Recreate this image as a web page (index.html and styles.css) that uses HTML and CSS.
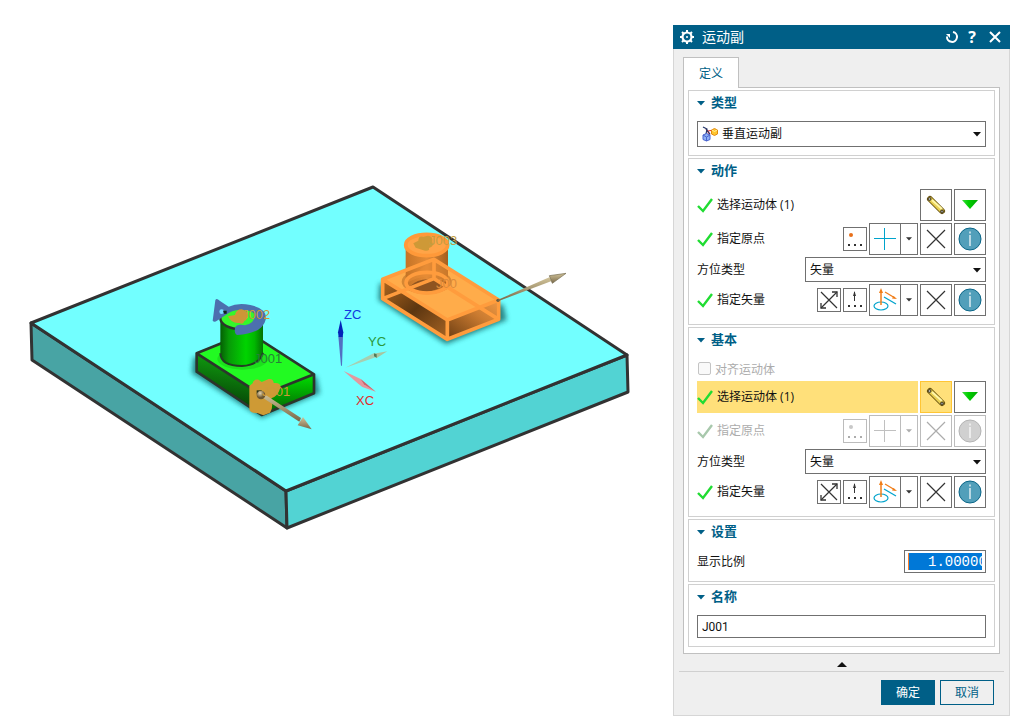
FILE: index.html
```html
<!DOCTYPE html>
<html lang="zh-CN">
<head>
<meta charset="utf-8">
<title>运动副</title>
<link rel="stylesheet" href="styles.css">
</head>
<body>
<svg class="defs" aria-hidden="true">
  <symbol id="check" viewBox="0 0 16 16"><path d="M1 9l5 5L15 2" fill="none" stroke="currentColor" stroke-width="2.400"/></symbol>
  <symbol id="pin" viewBox="0 0 24 24">
    <path d="M6 6L18 18" stroke="#6b5410" stroke-width="6" stroke-linecap="round"/>
    <path d="M6 6L18 18" stroke="#e8cf52" stroke-width="4" stroke-linecap="round"/>
    <path d="M8 7L18 16" stroke="#fff6a8" stroke-width="2"/>
    <circle cx="5.500" cy="6" r="1.500" fill="#aaa" stroke="#443a18"/><circle cx="18" cy="18.500" r="1.500" fill="#888" stroke="#443a18"/>
  </symbol>
  <symbol id="down" viewBox="0 0 18 10"><path d="M1 0h16L9 9z" fill="url(#greenTri)"/></symbol>
  <symbol id="dots" viewBox="0 0 24 24"><path d="M5 17h2v2H5zM11 17h2v2h-2zM17 17h2v2h-2z" fill="currentColor"/><circle cx="8" cy="8" r="2" fill="var(--dot)"/></symbol>
  <symbol id="updots" viewBox="0 0 24 24"><path d="M5 17h2v2H5zM11 17h2v2h-2zM17 17h2v2h-2z" fill="currentColor"/><path d="M11.500 13V4" stroke="currentColor"/><path d="M11.500 3l1.500 5h-3z" fill="currentColor"/></symbol>
  <symbol id="plus" viewBox="0 0 22 22"><path d="M10.500 0v22M0 10.500h22" fill="none" stroke="var(--plus)"/></symbol>
  <symbol id="cross" viewBox="0 0 20 20"><path d="M1 1l18 18M19 1L1 19" stroke="currentColor" stroke-width="1.200"/></symbol>
  <symbol id="flip" viewBox="0 0 24 24"><path d="M4 4l16 16M4 20L20 4" stroke="currentColor" stroke-width="1.200"/><path d="M15 4h5v5M4 15v5h5" fill="none" stroke="currentColor" stroke-width="1.300"/></symbol>
  <symbol id="info" viewBox="0 0 24 24"><circle cx="12" cy="12" r="11" fill="var(--disc)" stroke="var(--ring)"/><path d="M12 8v11M12 4.500v2" stroke="#fff" stroke-width="1.200"/></symbol>
  <symbol id="vector" viewBox="0 0 26 26">
    <ellipse cx="9" cy="19" rx="7" ry="4" fill="none" stroke="#00a3cc" stroke-width="1.200"/>
    <path d="M9 18V4" stroke="#f07d18" stroke-width="1.500"/><path d="M9 1l2 5H7z" fill="#f07d18"/>
    <path d="M13 5l10 6" stroke="#f07d18" stroke-width="1.300"/><path d="M25 12l-5-.500L21.500 9z" fill="#f07d18"/>
    <path d="M12 10l12 7" stroke="#00a3cc" stroke-width="1.300"/>
  </symbol>
  <symbol id="caret" viewBox="0 0 8 5"><path d="M0 0h8L4 4.500z" fill="currentColor"/></symbol>
  <linearGradient id="greenTri"><stop offset="0" stop-color="#3ddc3d"/><stop offset=".4" stop-color="#00cf00"/><stop offset="1" stop-color="#00a800"/></linearGradient>
</svg>

<main class="page">
  <svg class="scene" viewBox="0 25 673 691" role="img" aria-label="三维视图">
    <defs>
      <filter id="soft" x="-30%" y="-30%" width="160%" height="160%"><feGaussianBlur stdDeviation="8"/></filter>
      <linearGradient id="gCyl"><stop offset="0" stop-color="#045f04"/><stop offset=".2" stop-color="#079a07"/><stop offset=".6" stop-color="#00d400"/><stop offset=".8" stop-color="#00b800"/><stop offset="1" stop-color="#047004"/></linearGradient>
      <linearGradient id="gLeft" x1=".3" y1="0" x2="0.100" y2="1"><stop offset="0" stop-color="#10a010"/><stop offset="1" stop-color="#032803"/></linearGradient>
      <linearGradient id="gRight" x1="0" y1="0" x2="0" y2="1"><stop offset="0" stop-color="#00e000"/><stop offset="1" stop-color="#035a03"/></linearGradient>
      <linearGradient id="oCyl"><stop offset="0" stop-color="#c57426"/><stop offset=".5" stop-color="#e48b36"/><stop offset=".7" stop-color="#c87a30"/><stop offset="1" stop-color="#a45f1e"/></linearGradient>
      <linearGradient id="oLeft" x1="0" y1="0" x2="1" y2="1"><stop offset="0" stop-color="#b0671f"/><stop offset=".5" stop-color="#5c3610"/><stop offset="1" stop-color="#a86424"/></linearGradient>
      <linearGradient id="oRight" x1="0" y1="1" x2="1" y2="0"><stop offset="0" stop-color="#6b3d12"/><stop offset=".6" stop-color="#c97a30"/><stop offset="1" stop-color="#f09a44"/></linearGradient>
      <linearGradient id="tan" x1="0" y1="0" x2="0" y2="1"><stop offset="0" stop-color="#d2c49a"/><stop offset="1" stop-color="#786848"/></linearGradient>
      <radialGradient id="ball" cx=".4" cy=".3"><stop offset="0" stop-color="#e6d4b0"/><stop offset="1" stop-color="#6b5630"/></radialGradient>
    </defs>
    <g stroke="#323232" stroke-width="3" stroke-linejoin="round">
      <path d="M31 323L286 491 287 528 32 360z" fill="#48a4a4"/>
      <path d="M286 491L627 355 628 392 287 528z" fill="#52d3d3"/>
      <path d="M31 323L373 187 627 355 286 491z" fill="#72ffff"/>
    </g>
    <g transform="translate(180 285) scale(.33333)" stroke-linejoin="round">
      <path d="M40 215L35 265 245 400 420 325 410 275z" fill="#167070" opacity=".8" filter="url(#soft)"/>
      <path d="M50 205L245 330V390L50 260z" fill="url(#gLeft)"/>
      <path d="M245 330L402 268V325L245 390z" fill="url(#gRight)"/>
      <path d="M50 205L206 142 402 268 245 330z" fill="#22fa22"/>
      <path d="M50 205L206 142 402 268 245 330zM50 205V260L245 390 402 325V268M245 330v60" fill="none" stroke="#2c352c" stroke-width="8"/>
      <ellipse cx="188" cy="222" rx="76" ry="32" fill="#0a990a" opacity=".25"/>
      <path d="M121 100V210Q130 243 186 243 238 240 249 205V100z" fill="url(#gCyl)"/>
      <path d="M121 205Q122 243 186 243 238 240 249 203" fill="none" stroke="#243d24" stroke-width="6"/>
      <ellipse cx="185" cy="100" rx="64" ry="33" fill="#35f72b" stroke="#2c352c" stroke-width="7"/>
      <path d="M98 107L106 46Q109 38 119 47L146 65Q174 52 211 60 260 70 258 101 248 146 172 150 162 148 165 129 170 115 195 121 223 116 225 91 220 75 181 75 155 75 136 91L111 107Q103 113 98 107z" fill="#4c70ae"/>
      <circle cx="125" cy="80" r="7" fill="#75ddff"/><path d="M129 77h11v9h-8z" fill="#13201b"/>
      <path d="M144 94L165 90Q168 73 185 73 203 77 204 92 200 106 193 108 190 120 178 114 155 117 144 94z" fill="#ce9637"/>
      <path d="M208 303L218 295Q220 282 236 284L245 291 266 282Q280 280 281 294 302 292 302 307 292 336 274 340 281 368 270 383L250 391 232 384Q210 385 208 372z" fill="#ce9a35"/>
      <path d="M230 316h15v12h-15z" fill="#29351c"/>
      <path d="M248 324L363 399 358 410 246 337z" fill="url(#tan)"/>
      <path d="M395 433L353 421 369 396z" fill="url(#tan)"/><circle cx="243" cy="330" r="13" fill="url(#ball)"/>
    </g>
    <g transform="translate(370 220) scale(.33333)" stroke-linejoin="round">
      <path d="M28 190L25 240 228 373 410 300 400 255z" fill="#176868" opacity=".8" filter="url(#soft)"/>
      <path d="M38 178L232 300V358L38 236z" fill="url(#oLeft)"/>
      <path d="M232 300L386 240V298L232 358z" fill="url(#oRight)"/>
      <path d="M38 178L192 118 386 240 232 300z" fill="#ffac4a"/>
      <ellipse cx="170" cy="185" rx="75" ry="38" fill="#b96e27" opacity=".6"/>
      <path d="M107 75H234V185Q215 215 170 217 125 213 107 185z" fill="url(#oCyl)"/>
      <path d="M110 180L190 118 234 145V190Q170 150 110 190z" fill="#e88d35" opacity=".55"/>
      <path d="M118 200Q160 162 222 190 205 215 169 215 130 214 118 200z" fill="#8f5420"/>
      <path d="M38 178L192 118 386 240 232 300zM38 178V236L232 358 386 298V240M232 300v58M192 118v58M38 236L192 176 386 298" fill="none" stroke="#ff9c3d" stroke-width="11"/>
      <ellipse cx="171" cy="188" rx="63" ry="31" fill="none" stroke="#ff9c3d" stroke-width="11"/>
      <ellipse cx="170" cy="75" rx="63" ry="32" fill="#ffa447" stroke="#ff9939" stroke-width="11"/>
      <path d="M130 70L145 62Q145 46 160 50L174 47Q190 48 187 65 193 79 177 84 180 94 165 92L137 83z" fill="#ce9937"/>
      <circle cx="384" cy="241" r="5" fill="#655a3e"/>
      <path d="M384 239L538 172 545 183 386 243z" fill="url(#tan)"/><path d="M538 167L588 160 547 190z" fill="url(#tan)" stroke="#70664a" stroke-width="2"/>
    </g>
    <g transform="translate(325 295) scale(.33333)">
      <path d="M40 124h14L51 212h-3z" fill="#526fc2"/><path d="M47 75L55 112 53 126H41L39 112z" fill="#0424b8"/>
      <path d="M61 218L146 175 154 186z" fill="#a7ceb1"/><path d="M187 169L146 176 154 190z" fill="#a8c5a0"/><path d="M147 175l8 3v10l-8-4z" fill="#547954"/>
      <path d="M56 228L107 252 152 290 112 276 98 265z" fill="#e4989e"/><path d="M107 252L152 290 117 268z" fill="#c9646c"/>
    </g>
    <g class="scene-text">
      <text x="344" y="319" fill="#1438e0">ZC</text><text x="368" y="346" fill="#2b993c">YC</text><text x="356" y="405" fill="#e02d2d">XC</text>
      <text x="242" y="319" fill="#cd9838">J002</text><text x="254" y="363" fill="#288038">J001</text><text x="262" y="396" fill="#cd9838">J001</text>
      <text x="429" y="245" fill="#c39d42">J003</text><text x="436" y="288" fill="#dc8b3b">J00</text>
    </g>
  </svg>

  <form class="dialog" aria-label="运动副">
    <header class="titlebar">
      <svg class="gear" viewBox="0 0 14 14"><circle cx="7" cy="7" r="4.500" fill="none" stroke="#fff" stroke-width="2.200"/><path d="M7 0v3M7 11v3M0 7h3M11 7h3M2 2l2 2M10 10l2 2M2 12l2-2M10 4l2-2" stroke="#fff" stroke-width="2"/><circle cx="7" cy="7" r="1" fill="#fff"/></svg>
      <h1 class="title">运动副</h1>
      <button type="button" class="tool" aria-label="重置"><svg width="14" height="14" viewBox="0 0 14 14"><path d="M8 2a5 5 0 1 1-6 4.500" fill="none" stroke="#fff" stroke-width="2"/><path d="M1 4h4v4z" fill="#fff"/></svg></button>
      <button type="button" class="tool help" aria-label="帮助">?</button>
      <button type="button" class="tool close" aria-label="关闭"><svg width="12" height="12" viewBox="0 0 12 12"><path d="M1 1l10 10M11 1L1 11" stroke="#fff" stroke-width="2"/></svg></button>
    </header>
    <div class="body">
      <button type="button" class="tab">定义</button>
      <div class="panel">
        <section class="group">
          <button type="button" class="group-head"><svg class="caret"><use href="#caret"/></svg><span>类型</span></button>
          <div class="combo combo-type">
            <svg class="type-icon" viewBox="0 0 16 16"><path d="M4 3l4 6M6 5l6-1" stroke="#e33" stroke-width="1.200"/><path d="M1 1l4 2-1 5M4 3l4 5" stroke="#236" stroke-width="1.200" fill="none"/><path d="M9.500 4l3-1.500 3 1.500v4l-3 1.500-3-1.500z" fill="#ffc52e" stroke="#e08a10"/><path d="M10 4l2.500 1.500L15 4" stroke="#fff0a0" fill="none"/><path d="M1 9l3.500-1.500L8 9v4.500L4.500 15 1 13.500z" fill="#8fb2f5" stroke="#4a65d0"/><path d="M1 9l3.500 2L8 9M4.500 11v4" stroke="#4a65d0" fill="none"/></svg>
            <select aria-label="类型"><option>垂直运动副</option></select><svg class="arrow"><use href="#caret"/></svg>
          </div>
        </section>

        <section class="group">
          <button type="button" class="group-head"><svg class="caret"><use href="#caret"/></svg><span>动作</span></button>
          <div class="row">
            <span class="label"><svg class="check"><use href="#check"/></svg><span>选择运动体 (1)</span></span>
            <button type="button" class="btn" aria-label="选择对象"><svg class="i24"><use href="#pin"/></svg></button>
            <button type="button" class="btn" aria-label="过滤器"><svg class="tri"><use href="#down"/></svg></button>
          </div>
          <div class="row">
            <span class="label"><svg class="check"><use href="#check"/></svg><span>指定原点</span></span>
            <button type="button" class="btn small" aria-label="点对话框"><svg class="i24"><use href="#dots"/></svg></button>
            <div class="split"><button type="button" class="main" aria-label="点"><svg class="i22"><use href="#plus"/></svg></button><button type="button" class="more" aria-label="更多点"><svg class="mini"><use href="#caret"/></svg></button></div>
            <button type="button" class="btn" aria-label="清除"><svg class="i20"><use href="#cross"/></svg></button>
            <button type="button" class="btn" aria-label="信息"><svg class="i24"><use href="#info"/></svg></button>
          </div>
          <div class="row">
            <label class="label" for="orient1"><span>方位类型</span></label>
            <div class="combo"><select id="orient1"><option>矢量</option></select><svg class="arrow"><use href="#caret"/></svg></div>
          </div>
          <div class="row">
            <span class="label"><svg class="check"><use href="#check"/></svg><span>指定矢量</span></span>
            <button type="button" class="btn small" aria-label="反向"><svg class="i24"><use href="#flip"/></svg></button>
            <button type="button" class="btn small" aria-label="矢量对话框"><svg class="i24"><use href="#updots"/></svg></button>
            <div class="split"><button type="button" class="main" aria-label="矢量"><svg class="i26"><use href="#vector"/></svg></button><button type="button" class="more" aria-label="更多矢量"><svg class="mini"><use href="#caret"/></svg></button></div>
            <button type="button" class="btn" aria-label="清除"><svg class="i20"><use href="#cross"/></svg></button>
            <button type="button" class="btn" aria-label="信息"><svg class="i24"><use href="#info"/></svg></button>
          </div>
        </section>

        <section class="group">
          <button type="button" class="group-head"><svg class="caret"><use href="#caret"/></svg><span>基本</span></button>
          <label class="tick"><input type="checkbox" disabled>对齐运动体</label>
          <div class="row">
            <span class="label active"><svg class="check"><use href="#check"/></svg><span>选择运动体 (1)</span></span>
            <button type="button" class="btn selected" aria-label="选择对象"><svg class="i24"><use href="#pin"/></svg></button>
            <button type="button" class="btn" aria-label="过滤器"><svg class="tri"><use href="#down"/></svg></button>
          </div>
          <div class="row off">
            <span class="label"><svg class="check"><use href="#check"/></svg><span>指定原点</span></span>
            <button type="button" disabled class="btn small" aria-label="点对话框"><svg class="i24"><use href="#dots"/></svg></button>
            <div class="split"><button type="button" disabled class="main" aria-label="点"><svg class="i22"><use href="#plus"/></svg></button><button type="button" disabled class="more" aria-label="更多点"><svg class="mini"><use href="#caret"/></svg></button></div>
            <button type="button" disabled class="btn" aria-label="清除"><svg class="i20"><use href="#cross"/></svg></button>
            <button type="button" disabled class="btn" aria-label="信息"><svg class="i24"><use href="#info"/></svg></button>
          </div>
          <div class="row">
            <label class="label" for="orient2"><span>方位类型</span></label>
            <div class="combo"><select id="orient2"><option>矢量</option></select><svg class="arrow"><use href="#caret"/></svg></div>
          </div>
          <div class="row">
            <span class="label"><svg class="check"><use href="#check"/></svg><span>指定矢量</span></span>
            <button type="button" class="btn small" aria-label="反向"><svg class="i24"><use href="#flip"/></svg></button>
            <button type="button" class="btn small" aria-label="矢量对话框"><svg class="i24"><use href="#updots"/></svg></button>
            <div class="split"><button type="button" class="main" aria-label="矢量"><svg class="i26"><use href="#vector"/></svg></button><button type="button" class="more" aria-label="更多矢量"><svg class="mini"><use href="#caret"/></svg></button></div>
            <button type="button" class="btn" aria-label="清除"><svg class="i20"><use href="#cross"/></svg></button>
            <button type="button" class="btn" aria-label="信息"><svg class="i24"><use href="#info"/></svg></button>
          </div>
        </section>

        <section class="group">
          <button type="button" class="group-head"><svg class="caret"><use href="#caret"/></svg><span>设置</span></button>
          <div class="row">
            <label class="label" for="ratio"><span>显示比例</span></label>
            <input class="number" id="ratio" type="text" value="1.00000">
          </div>
        </section>

        <section class="group">
          <button type="button" class="group-head"><svg class="caret"><use href="#caret"/></svg><span>名称</span></button>
          <input class="name" type="text" aria-label="名称" value="J001">
        </section>
      </div>
      <button type="button" class="fold" aria-label="收起"><svg width="10" height="5" viewBox="0 0 10 5"><path d="M5 0l5 5H0z" fill="#111"/></svg></button>
      <footer class="actions">
        <button type="submit" class="primary">确定</button>
        <button type="button" class="secondary">取消</button>
      </footer>
    </div>
  </form>
</main>
</body>
</html>
```
FILE: styles.css
```css
* { box-sizing: border-box; }
body { margin: 0; background: #fff; }
body, button, input, select {
  font-family: "Open Sans", "Noto Sans CJK SC", sans-serif;
  font-size: 12px;
  color: #111;
}
button { padding: 0; border: 0; background: none; }
svg { display: block; flex: none; }
.defs { position: absolute; width: 0; height: 0; }

.page { display: flex; align-items: flex-start; padding: 25px 22px 11px 0; }
.scene { flex: 1; min-width: 0; height: auto; }
.scene-text { font-family: "Liberation Sans", sans-serif; font-size: 13px; }

.dialog {
  --dot: #e8701a;
  --disc: #529fba;
  --ring: #0b6688;
  --plus: #00a3cc;
  width: 337px;
  flex: none;
  background: #efefef;
}
.titlebar {
  display: flex;
  align-items: center;
  height: 24px;
  padding: 0 9px 0 7px;
  background: #005f87;
}
.gear { width: 14px; height: 14px; margin-right: 8px; }
.title { flex: 1; margin: 0; font-size: 14px; font-weight: 400; line-height: 24px; color: #fff; }
.tool { display: flex; align-items: center; justify-content: center; width: 20px; height: 24px; color: #fff; }
.help { font-size: 16px; font-weight: 700; }
.close { width: 12px; margin-left: 7px; }

.body { padding: 8px 5px 10px; border: 1px solid #d6d6d6; border-top: 0; }
.tab {
  position: relative;
  display: block;
  width: 56px;
  height: 31px;
  margin: 0 0 -1px 4px;
  padding-bottom: 1px;
  background: #fff;
  border: 1px solid #c0c0c0;
  border-bottom: 0;
  color: #005f87;
}
.panel {
  display: flex;
  flex-direction: column;
  gap: 2px;
  margin: 0 4px;
  padding: 2px 4px 6px;
  background: #fff;
  border: 1px solid #c0c0c0;
}
.group {
  display: flex;
  flex-direction: column;
  gap: 2px;
  padding: 0 8px 8px;
  border: 1px solid #d0d0d0;
}
.group-head {
  display: flex;
  align-items: center;
  gap: 6px;
  height: 24px;
  margin-bottom: 4px;
  font-size: 13px;
  font-weight: 700;
  color: #005f87;
}
.group-head span { padding-bottom: 3px; }
.caret { width: 8px; height: 5px; }

.row { display: flex; align-items: center; gap: 2px; }
.label { flex: 1; display: flex; align-items: center; gap: 4px; }
.label span { padding-bottom: 2px; }
.active { align-self: stretch; background: #ffe07a; }
.check { width: 16px; height: 16px; color: #20dc32; }
.i20 { width: 20px; height: 20px; }
.i22 { width: 22px; height: 22px; }
.i24 { width: 24px; height: 24px; }
.i26 { width: 26px; height: 26px; }
.tri { width: 18px; height: 10px; }
.mini { width: 6px; height: 4px; }

.btn, .main, .more {
  display: flex;
  align-items: center;
  justify-content: center;
  height: 32px;
  border: 1px solid #707070;
  background: #fff;
  color: #333;
}
.btn { width: 32px; }
.btn.small { width: 24px; height: 24px; }
.split { display: flex; }
.main { width: 32px; }
.more { width: 18px; margin-left: -1px; }
.btn.selected { background: #ffe07a; border-color: #ffc534; }
.off { --dot: #c8c8c8; --disc: #d0d0d0; --ring: #b4b4b4; --plus: #c0c0c0; }
.off .label, .off button { color: #acacac; }
.off button { border-color: #bcbcbc; }
.off .check { color: #a8c8ac; }

.combo { position: relative; width: 181px; }
.combo select {
  display: block;
  appearance: none;
  width: 100%;
  height: 25px;
  padding: 0 20px 0 4px;
  border: 1px solid #707070;
  border-radius: 0;
  background: #fff;
}
.combo.combo-type { width: auto; }
.combo-type select { height: 26px; padding: 0 20px 2px 24px; }
.type-icon { position: absolute; left: 5px; top: 5px; width: 16px; height: 16px; }
.arrow { position: absolute; right: 5px; top: 11px; width: 8px; height: 5px; }

.tick { display: flex; align-items: center; gap: 4px; height: 21px; color: #acacac; }
.tick input {
  appearance: none;
  width: 13px;
  height: 13px;
  margin: 0 0 0 1px;
  border: 1px solid #c4c4c4;
  border-radius: 2px;
  background: #f9f9f9;
}

.number, .name { height: 23px; border: 1px solid #707070; border-radius: 0; outline: 0; }
.number {
  width: 82px;
  padding: 2px 3px;
  font-family: "Liberation Mono", monospace;
  font-size: 14px;
  text-indent: 20px;
  color: #fff;
  background: linear-gradient(90deg, #ff7f27 1px, #0078d7 1px) content-box;
}
.name { padding: 0 4px; font-family: Roboto, sans-serif; }

.fold { display: flex; align-items: center; justify-content: center; width: 100%; height: 17px; padding-top: 4px; }
.actions { display: flex; justify-content: flex-end; gap: 5px; padding: 8px 10px 0 0; border-top: 1px solid #d0d0d0; }
.actions button { width: 54px; height: 25px; padding-bottom: 1px; border: 1px solid #005f87; color: #005f87; }
.actions .primary { background: #005f87; color: #fff; }
```
